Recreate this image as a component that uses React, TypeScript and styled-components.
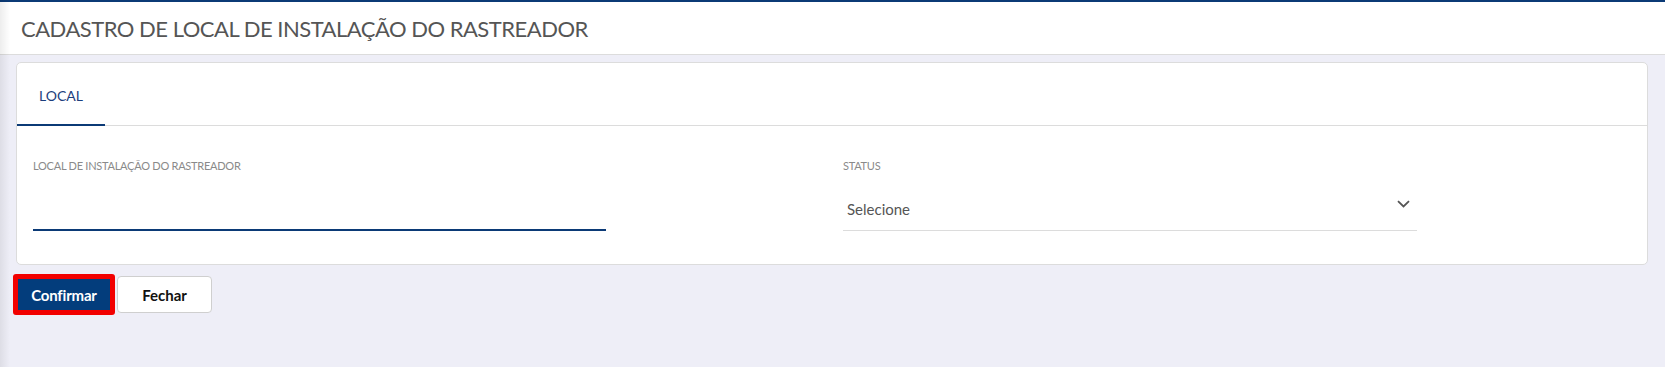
import React from "react";
import styled, { createGlobalStyle } from "styled-components";

const GlobalStyle = createGlobalStyle`
  html, body { margin: 0; padding: 0; }
  body {
    background: #eeeef7;
    font-family: Lato, "Noto Sans", "Liberation Sans", sans-serif;
  }
  * { box-sizing: border-box; }
`;

const Page = styled.div`
  position: relative;
  min-height: 367px;
  background: #eeeef7;
  &::after {
    content: "";
    position: absolute;
    top: 0;
    left: 0;
    bottom: 0;
    width: 10px;
    pointer-events: none;
    background: linear-gradient(to right, rgba(0, 0, 0, 0.07), rgba(0, 0, 0, 0));
  }
`;

const Header = styled.header`
  display: flex;
  align-items: center;
  height: 55px;
  padding-left: 21px;
  background: #fff;
  border-top: 2px solid #0b3a76;
  border-bottom: 1px solid #dcdcdc;
`;

const Title = styled.h1`
  margin: 0;
  font-size: 22px;
  font-weight: 400;
  color: #555;
  letter-spacing: -0.5px;
`;

const CardWrap = styled.div`
  padding: 7px 17px 0 16px;
`;

const Card = styled.section`
  background: #fff;
  border: 1px solid #dcdcdc;
  border-radius: 5px;
`;

const TabBar = styled.div`
  display: flex;
  height: 63px;
  border-bottom: 1px solid #dcdcdc;
`;

const Tab = styled.div<{ $active?: boolean }>`
  display: flex;
  align-items: center;
  justify-content: center;
  width: 88px;
  margin-bottom: -1px;
  padding-top: 3px;
  font-size: 14px;
  color: #1b3e7c;
  border-bottom: 2px solid ${(p) => (p.$active ? "#0b3a76" : "transparent")};
`;

const FormRow = styled.div`
  display: grid;
  grid-template-columns: 573px 574px;
  column-gap: 237px;
  padding: 33px 16px 33px;
`;

const Field = styled.div`
  display: flex;
  flex-direction: column;
`;

const Label = styled.label`
  font-size: 11px;
  line-height: 14px;
  color: #8a8a8a;
  text-transform: uppercase;
  letter-spacing: -0.25px;
`;

const TextInput = styled.input`
  margin-top: 16px;
  height: 42px;
  border: none;
  border-bottom: 2px solid #0b3a76;
  outline: none;
  font: inherit;
  font-size: 15px;
  color: #555;
  padding: 0;
  background: transparent;
`;

const SelectBox = styled.div`
  position: relative;
  display: flex;
  align-items: center;
  margin-top: 16px;
  height: 42px;
  padding: 0 4px 1px;
  border-bottom: 1px solid #dcdcdc;
  font-size: 15px;
  color: #555;
`;

const Chevron = styled.svg`
  position: absolute;
  right: 7px;
  top: 11px;
`;

const Actions = styled.div`
  display: flex;
  align-items: center;
  gap: 2px;
  padding: 9px 0 0 13px;
`;

const PrimaryButton = styled.button`
  width: 102px;
  height: 41px;
  border: 5px solid #f20000;
  border-radius: 3px;
  background: #033d7c;
  color: #fff;
  font: inherit;
  font-size: 15px;
  font-weight: 700;
  letter-spacing: -0.2px;
  cursor: pointer;
`;

const SecondaryButton = styled.button`
  width: 95px;
  height: 37px;
  border: 1px solid #cfcfcf;
  border-radius: 4px;
  background: #fff;
  color: #111;
  font: inherit;
  font-size: 15px;
  font-weight: 700;
  cursor: pointer;
`;

export default function App() {
  return (
    <>
      <GlobalStyle />
      <Page>
        <Header>
          <Title>CADASTRO DE LOCAL DE INSTALAÇÃO DO RASTREADOR</Title>
        </Header>
        <CardWrap>
          <Card>
            <TabBar>
              <Tab $active>LOCAL</Tab>
            </TabBar>
            <FormRow>
              <Field>
                <Label>Local de instalação do rastreador</Label>
                <TextInput />
              </Field>
              <Field>
                <Label>Status</Label>
                <SelectBox>
                  Selecione
                  <Chevron width="13" height="8" viewBox="0 0 13 8">
                    <path d="M1 1.2 L6.5 6.4 L12 1.2" fill="none" stroke="#555" strokeWidth="1.8" />
                  </Chevron>
                </SelectBox>
              </Field>
            </FormRow>
          </Card>
        </CardWrap>
        <Actions>
          <PrimaryButton>Confirmar</PrimaryButton>
          <SecondaryButton>Fechar</SecondaryButton>
        </Actions>
      </Page>
    </>
  );
}
